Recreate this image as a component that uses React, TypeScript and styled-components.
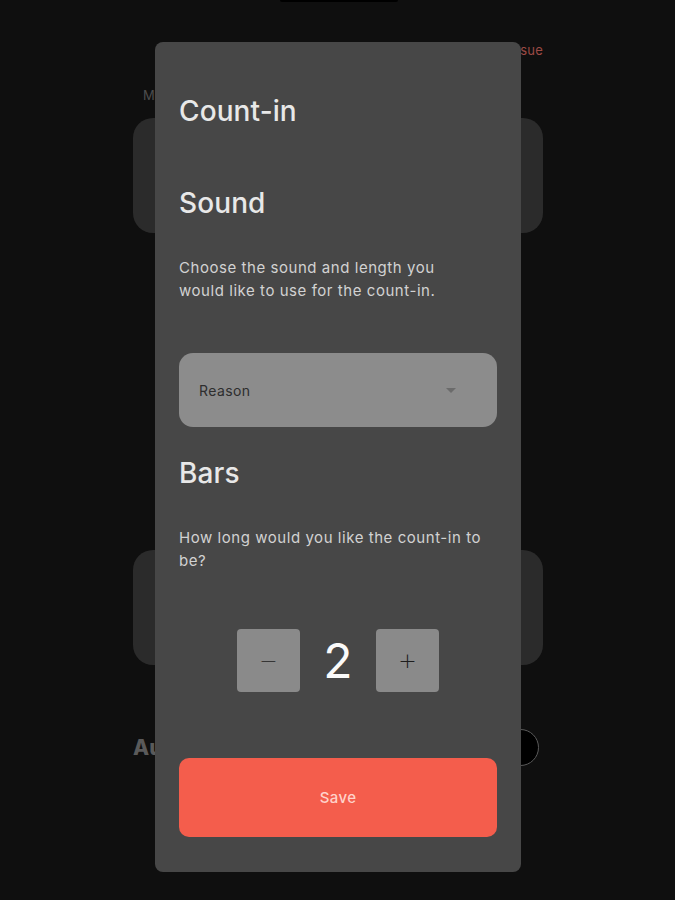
import React, { useState } from 'react';
import styled, { createGlobalStyle } from 'styled-components';

const GlobalStyle = createGlobalStyle`
  html, body {
    margin: 0;
    padding: 0;
    background: #0f0f0f;
  }
  body {
    font-family: Inter, 'Noto Sans', sans-serif;
    -webkit-font-smoothing: antialiased;
  }
`;

const Styled = {
  Screen: styled.div`
    width: 675px;
    height: 900px;
    background: #0f0f0f;
    display: flex;
    flex-direction: column;
    overflow: hidden;
  `,
  Notch: styled.div`
    align-self: center;
    width: 118px;
    height: 2px;
    margin-left: 3px;
    background: #000;
    border-radius: 0 0 4px 4px;
  `,
  Header: styled.div`
    display: flex;
    justify-content: flex-end;
    padding: 40px 132px 0 133px;
  `,
  ReportLink: styled.span`
    font-size: 13px;
    color: #9c4a45;
    letter-spacing: 0.2px;
  `,
  Label: styled.div`
    margin: 29px 0 0 143px;
    font-size: 13px;
    color: #4d4d4d;
  `,
  BackCard: styled.div<{ $top: number }>`
    margin: ${(p) => p.$top}px 132px 0 133px;
    height: 115px;
    border-radius: 20px;
    background: #2b2b2b;
  `,
  BackRow: styled.div`
    display: flex;
    justify-content: space-between;
    align-items: center;
    margin: 64px 136px 0 133px;
  `,
  BackTitle: styled.span`
    font-size: 21px;
    font-weight: 800;
    color: #5a5a5a;
  `,
  Toggle: styled.span`
    width: 35px;
    height: 35px;
    border-radius: 50%;
    border: 1px solid #5a5a5a;
    background: #000;
  `,
  Modal: styled.div`
    position: fixed;
    left: 155px;
    top: 42px;
    width: 366px;
    height: 830px;
    box-sizing: border-box;
    padding: 0 24px;
    background: #474747;
    border-radius: 8px;
    display: flex;
    flex-direction: column;
  `,
  Heading: styled.h2<{ $top: number }>`
    margin: ${(p) => p.$top}px 0 0;
    font-size: 28px;
    line-height: 36px;
    font-weight: 500;
    color: #e8e8e8;
    letter-spacing: 0.1px;
  `,
  Text: styled.p<{ $top: number }>`
    margin: ${(p) => p.$top}px 0 0;
    max-width: 304px;
    font-size: 15px;
    line-height: 23px;
    color: #d2d2d2;
    letter-spacing: 0.55px;
  `,
  Select: styled.div`
    margin-top: 51px;
    height: 74px;
    border-radius: 14px;
    background: #8c8c8c;
    display: flex;
    align-items: center;
    justify-content: space-between;
    padding: 0 41px 0 20px;
    box-sizing: border-box;
  `,
  SelectValue: styled.span`
    font-size: 14px;
    color: #2e2e2e;
    letter-spacing: 0.4px;
  `,
  Caret: styled.span`
    width: 0;
    height: 0;
    border-left: 5px solid transparent;
    border-right: 5px solid transparent;
    border-top: 5px solid #6b6b6b;
  `,
  Stepper: styled.div`
    margin-top: 57px;
    display: flex;
    justify-content: center;
    align-items: center;
  `,
  StepButton: styled.button`
    width: 63px;
    height: 63px;
    border: none;
    border-radius: 4px;
    background: #8a8a8a;
    color: #1e1e1e;
    font-family: 'DejaVu Sans', sans-serif;
    font-size: 22px;
    font-weight: 300;
    display: flex;
    align-items: center;
    justify-content: center;
    padding: 0;
  `,
  Count: styled.span`
    width: 76px;
    text-align: center;
    font-size: 48px;
    font-weight: 400;
    color: #fafafa;
    line-height: 63px;
  `,
  SaveButton: styled.button`
    margin-top: 66px;
    height: 79px;
    border: none;
    border-radius: 10px;
    background: #f45d4c;
    color: #ffd2ca;
    font-family: Inter, sans-serif;
    font-size: 15px;
    font-weight: 500;
    letter-spacing: 0.4px;
  `,
};

export default function App() {
  const [bars, setBars] = useState(2);

  return (
    <>
      <GlobalStyle />
      <Styled.Screen>
        <Styled.Notch />
        <Styled.Header>
          <Styled.ReportLink>Report issue</Styled.ReportLink>
        </Styled.Header>
        <Styled.Label>Metronome</Styled.Label>
        <Styled.BackCard $top={15} />
        <Styled.BackCard $top={317} />
        <Styled.BackRow>
          <Styled.BackTitle>Auto-start</Styled.BackTitle>
          <Styled.Toggle />
        </Styled.BackRow>
      </Styled.Screen>

      <Styled.Modal>
        <Styled.Heading $top={51}>Count-in</Styled.Heading>
        <Styled.Heading $top={56}>Sound</Styled.Heading>
        <Styled.Text $top={35}>
          Choose the sound and length you would like to use for the count-in.
        </Styled.Text>
        <Styled.Select>
          <Styled.SelectValue>Reason</Styled.SelectValue>
          <Styled.Caret />
        </Styled.Select>
        <Styled.Heading $top={28}>Bars</Styled.Heading>
        <Styled.Text $top={35}>How long would you like the count-in to be?</Styled.Text>
        <Styled.Stepper>
          <Styled.StepButton onClick={() => setBars((b) => Math.max(1, b - 1))}>−</Styled.StepButton>
          <Styled.Count>{bars}</Styled.Count>
          <Styled.StepButton onClick={() => setBars((b) => b + 1)}>+</Styled.StepButton>
        </Styled.Stepper>
        <Styled.SaveButton>Save</Styled.SaveButton>
      </Styled.Modal>
    </>
  );
}
